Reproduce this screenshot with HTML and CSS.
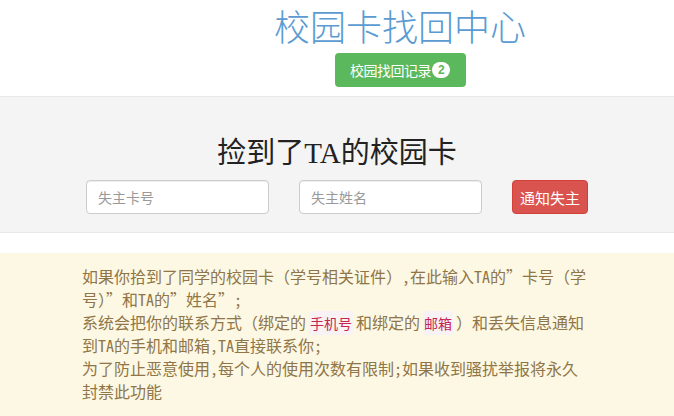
FILE: index.html
```html
<!DOCTYPE html>
<html lang="zh">
<head>
<meta charset="utf-8">
<title>校园卡找回中心</title>
<link rel="stylesheet" href="styles.css">
</head>
<body>
<header class="top">
  <h1 class="title">校园卡找回中心</h1>
  <a class="btn-green">校园找回记录<span class="badge">2</span></a>
</header>
<section class="band">
  <h2 class="heading">捡到了<span class="latin">TA</span>的校园卡</h2>
  <form class="row">
    <input class="field" type="text" placeholder="失主卡号">
    <input class="field" type="text" placeholder="失主姓名">
    <button class="btn-red" type="button">通知失主</button>
  </form>
</section>
<section class="notice">
  <p class="text">如果你拾到了同学的校园卡（学号相关证件）,在此输入TA的”卡号（学号）”和TA的”姓名”;<br>系统会把你的联系方式（绑定的 <code class="hl">手机号</code> 和绑定的 <code class="hl">邮箱</code> ）和丢失信息通知到TA的手机和邮箱,TA直接联系你;<br>为了防止恶意使用,每个人的使用次数有限制;如果收到骚扰举报将永久封禁此功能</p>
</section>
</body>
</html>
```
FILE: styles.css
```css
html, body {
  margin: 0;
  padding: 0;
  background: #fff;
  font-family: "Noto Sans CJK SC", "Noto Sans", sans-serif;
}
.top {
  height: 96px;
  box-sizing: border-box;
  padding: 4px 0 0 126px;
  display: flex;
  flex-direction: column;
  align-items: center;
}
.title {
  margin: 0;
  font-size: 36px;
  line-height: 42px;
  font-weight: 300;
  color: #5b9bd2;
}
.btn-green {
  margin-top: 7px;
  height: 34px;
  width: 131px;
  box-sizing: border-box;
  background: #5cb85c;
  border-radius: 4px;
  color: #fff;
  font-size: 14px;
  display: flex;
  align-items: center;
  justify-content: center;
  letter-spacing: -0.5px;
}
.badge {
  display: inline-block;
  background: #fff;
  color: #5cb85c;
  font-family: "Liberation Sans", sans-serif;
  font-weight: 700;
  font-size: 12px;
  line-height: 16px;
  min-width: 10px;
  padding: 0 4px;
  border-radius: 9px;
  margin-left: 1px;
  text-align: center;
}
.band {
  background: #f4f4f4;
  border-top: 1px solid #e8e8e8;
  border-bottom: 1px solid #e8e8e8;
  height: 137px;
  box-sizing: border-box;
  padding-top: 38px;
}
.heading {
  margin: 0;
  text-align: center;
  font-family: "Liberation Serif", "Noto Sans CJK SC", serif;
  font-weight: 400;
  font-size: 29px;
  line-height: 36px;
  color: #222;
}
.row {
  margin: 9px 0 0 86px;
  display: flex;
  gap: 30px;
}
.field {
  width: 183px;
  height: 34px;
  box-sizing: border-box;
  border: 1px solid #ccc;
  border-radius: 4px;
  padding: 0 11px;
  font-size: 14px;
  font-family: "Noto Sans CJK SC", sans-serif;
  background: #fff;
  box-shadow: inset 0 1px 1px rgba(0,0,0,.075);
}
.field::placeholder { color: #999; }
.btn-red {
  width: 76px;
  height: 34px;
  box-sizing: border-box;
  border: 1px solid #d43f3a;
  background: #d9534f;
  color: #fff;
  border-radius: 4px;
  font-size: 15px;
  font-family: "Noto Sans CJK SC", sans-serif;
  padding: 0;
}
.notice {
  margin-top: 20px;
  background: #fcf8e3;
  height: 163px;
  padding: 12px 0 0 82px;
  box-sizing: border-box;
}
.text {
  margin: 0;
  width: 509px;
  font-family: "Noto Sans Mono CJK SC", "Liberation Sans", "Noto Sans CJK SC", monospace;
  font-size: 16px;
  line-height: 23px;
  word-spacing: -5px;
  color: #8f7547;
}
.hl {
  font-family: "Noto Sans CJK SC", sans-serif;
  font-size: 14px;
  line-height: 1;
  word-spacing: 0;
  color: #c7254e;
  background: #f9f2f4;
  padding: 2px 1px;
  border-radius: 3px;
}
```
